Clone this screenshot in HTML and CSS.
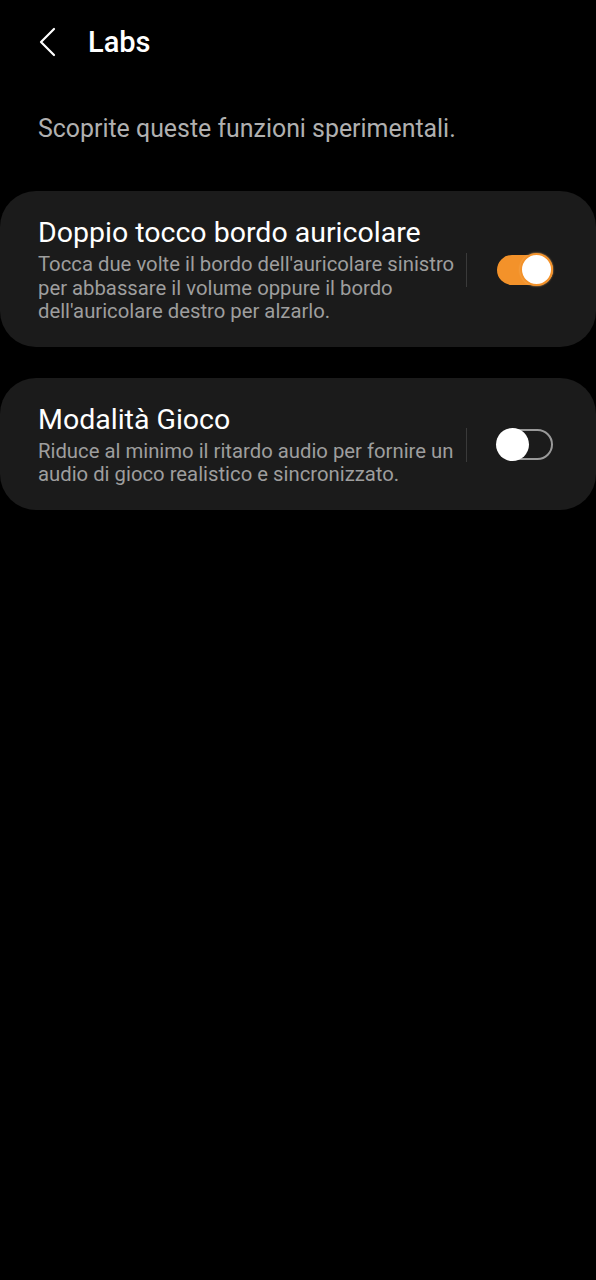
FILE: index.html
```html
<!DOCTYPE html>
<html lang="it">
<head>
    <meta charset="UTF-8">
    <meta name="viewport" content="width=device-width, initial-scale=1.0">
    <title>Labs</title>
    <link rel="stylesheet" href="styles.css">
</head>
<body>
    <header class="topbar">
        <button class="back" aria-label="Indietro">
            <svg width="18" height="30" viewBox="0 0 18 30">
                <path d="M16 2 L3 15 L16 28" fill="none" stroke="#fff" stroke-width="2.2" stroke-linecap="round" stroke-linejoin="round"/>
            </svg>
        </button>
        <h1 class="title">Labs</h1>
    </header>

    <p class="intro">Scoprite queste funzioni sperimentali.</p>

    <section class="card">
        <div class="card-text">
            <h2>Doppio tocco bordo auricolare</h2>
            <p>Tocca due volte il bordo dell'auricolare sinistro per abbassare il volume oppure il bordo dell'auricolare destro per alzarlo.</p>
        </div>
        <span class="divider"></span>
        <span class="switch on"><span class="knob"></span></span>
    </section>

    <section class="card">
        <div class="card-text">
            <h2>Modalità Gioco</h2>
            <p>Riduce al minimo il ritardo audio per fornire un audio di gioco realistico e sincronizzato.</p>
        </div>
        <span class="divider"></span>
        <span class="switch"><span class="knob"></span></span>
    </section>
</body>
</html>
```

FILE: styles.css
```css
body {
    margin: 0;
    padding: 0;
    background-color: #000;
    font-family: Roboto, "Liberation Sans", sans-serif;
    color: #fff;
}

/* header row */
.topbar {
    display: flex;
    align-items: center;
    height: 84px;
    padding-left: 38px;
}

.back {
    background: none;
    border: 0;
    padding: 0;
    width: 50px;
    display: flex;
    align-items: center;
}

.title {
    margin: 0;
    font-size: 29px;
    font-weight: 500;
}

.intro {
    margin: 31px 0 0 38px;
    font-size: 24.9px;
    line-height: 28px;
    color: #b0b0b0;
}

/* setting cards */
.card {
    display: flex;
    align-items: center;
    background-color: #1b1b1b;
    border-radius: 36px;
    padding: 25px 43px 23px 38px;
}

.intro + .card {
    margin-top: 48px;
}

.card + .card {
    margin-top: 31px;
}

.card-text {
    flex: 1;
}

.card h2 {
    margin: 0 0 3px;
    font-size: 28.5px;
    font-weight: 400;
    line-height: 34px;
}

.card p {
    margin: 0;
    font-size: 20.3px;
    line-height: 23.5px;
    color: #9e9e9e;
}

.divider {
    width: 1px;
    height: 34px;
    background-color: #3a3a3a;
    margin: 0 30px 0 8px;
}

/* toggles */
.switch {
    position: relative;
    width: 56px;
    height: 31px;
    border-radius: 16px;
    border: 2px solid #9a9a9a;
    box-sizing: border-box;
}

.switch.on {
    height: 30px;
    background-color: #f3922a;
    border-color: #f3922a;
}

.knob {
    position: absolute;
    top: -3px;
    left: -3px;
    width: 33px;
    height: 33px;
    border-radius: 50%;
    background-color: #fff;
}

.switch.on .knob {
    left: auto;
    top: -3.5px;
    right: -2px;
    border: 2px solid #f3922a;
    box-sizing: border-box;
    box-shadow: 0 0 2px #f7b56a;
}
```
